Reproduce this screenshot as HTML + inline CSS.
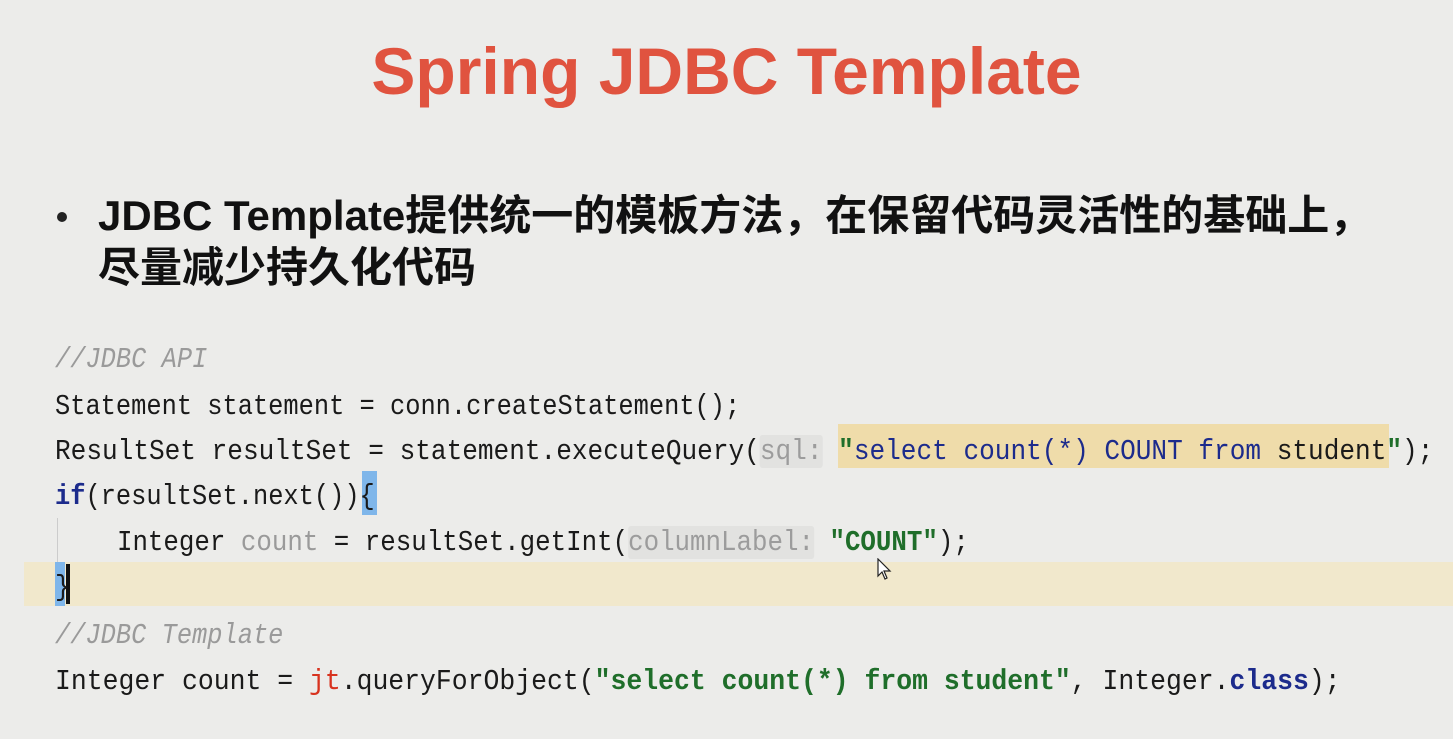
<!DOCTYPE html>
<html><head><meta charset="utf-8"><style>
body{margin:0;width:1453px;height:739px;background:#ececea;position:relative;overflow:hidden;font-family:"Liberation Sans","Noto Sans CJK SC",sans-serif}
.t{position:absolute;left:0;width:1453px;top:31px;text-align:center;font-size:66px;font-weight:bold;color:#e0533f;line-height:80px}
.b{position:absolute;left:98px;font-size:42px;font-weight:bold;color:#111;line-height:52px;white-space:nowrap;font-family:"Liberation Sans","Noto Sans CJK SC",sans-serif}
.dot{position:absolute;left:57px;top:212px;width:10px;height:10px;border-radius:50%;background:#222}
.c{position:absolute;left:55px;font-family:"Liberation Mono","Noto Sans CJK SC",monospace;font-size:29px;line-height:40px;white-space:pre;transform:scaleX(.875);transform-origin:0 50%;color:#1a1a1a}
.cm{color:#9a9a9a;font-style:italic}
.k{color:#1c2b8c;font-weight:bold}
.s{color:#1f6e2a;font-weight:bold}
.h{color:#9c9c9c;background:#e2e2e0;border-radius:3px}
.g{color:#9a9a9a}
.r{color:#d8331f}
</style></head><body>
<div class="t">Spring JDBC Template</div>
<div class="dot"></div>
<div class="b" style="top:190px">JDBC Template提供统一的模板方法，在保留代码灵活性的基础上，</div>
<div class="b" style="top:242px">尽量减少持久化代码</div>
<div style="position:absolute;left:24px;top:562px;width:1429px;height:44px;background:#f1e8cc"></div>
<div style="position:absolute;left:838px;top:424px;width:551px;height:44px;background:#efdcaa"></div>
<div style="position:absolute;left:362px;top:471px;width:15px;height:44px;background:#7fb6ea"></div>
<div style="position:absolute;left:55px;top:562px;width:10px;height:44px;background:#7fb6ea"></div>
<div style="position:absolute;left:66px;top:564px;width:4px;height:40px;background:#111"></div>
<div style="position:absolute;left:57px;top:518px;width:1px;height:44px;background:#ccc"></div>
<div class="c cm" style="top:340px">//JDBC API</div>
<div class="c" style="top:387px">Statement statement = conn.createStatement();</div>
<div class="c" style="top:432px;transform:scaleX(.90)">ResultSet resultSet = statement.executeQuery(<span class="h">sql:</span> <span class="s">"</span><span class="k" style="font-weight:normal">select count(*) COUNT from </span>student<span class="s">"</span>);</div>
<div class="c" style="top:477px"><span class="k">if</span>(resultSet.next()){</div>
<div class="c" style="top:523px;transform:scaleX(.89)">    Integer <span class="g">count</span> = resultSet.getInt(<span class="h">columnLabel:</span> <span class="s">"COUNT"</span>);</div>
<div class="c" style="top:568px">}</div>
<div class="c cm" style="top:616px">//JDBC Template</div>
<div class="c" style="top:662px;transform:scaleX(.912)">Integer count = <span class="r">jt</span>.queryForObject(<span class="s">"select count(*) from student"</span>, Integer.<span class="k">class</span>);</div>
<svg style="position:absolute;left:877px;top:558px" width="16" height="24" viewBox="0 0 16 24"><path d="M1 1 L1 18 L5 14 L8 21 L10 20 L7 13 L13 13 Z" fill="#fff" stroke="#222" stroke-width="1.2"/></svg>
</body></html>
